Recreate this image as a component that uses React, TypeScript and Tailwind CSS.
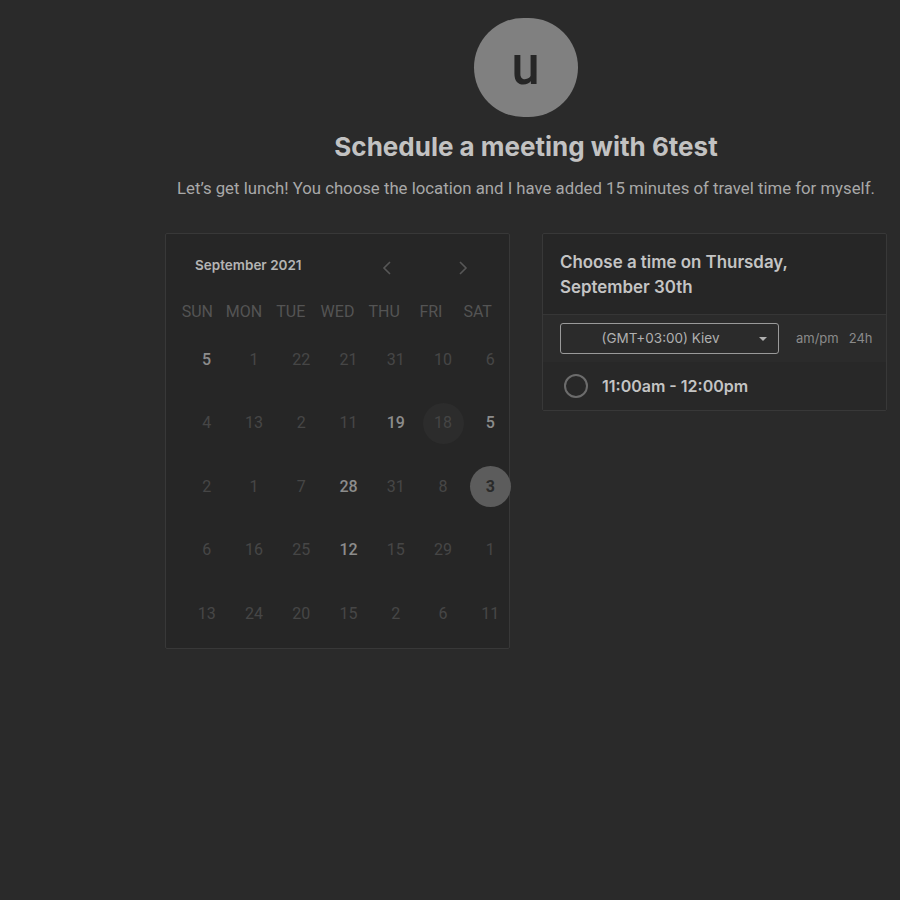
import React from "react";

type Day = { n: number; strong?: boolean; selected?: boolean; hover?: boolean };

const weeks: Day[][] = [
  [{ n: 5, strong: true }, { n: 1 }, { n: 22 }, { n: 21 }, { n: 31 }, { n: 10 }, { n: 6 }],
  [{ n: 4 }, { n: 13 }, { n: 2 }, { n: 11 }, { n: 19, strong: true }, { n: 18, hover: true }, { n: 5, strong: true }],
  [{ n: 2 }, { n: 1 }, { n: 7 }, { n: 28, strong: true }, { n: 31 }, { n: 8 }, { n: 3, selected: true }],
  [{ n: 6 }, { n: 16 }, { n: 25 }, { n: 12, strong: true }, { n: 15 }, { n: 29 }, { n: 1 }],
  [{ n: 13 }, { n: 24 }, { n: 20 }, { n: 15 }, { n: 2 }, { n: 6 }, { n: 11 }],
];

const dayNames = ["SUN", "MON", "TUE", "WED", "THU", "FRI", "SAT"];

function Chevron({ dir }: { dir: "left" | "right" }) {
  return (
    <svg width="12" height="16" viewBox="0 0 12 16" fill="none">
      <polyline
        points={dir === "left" ? "9,2 3,8 9,14" : "3,2 9,8 3,14"}
        stroke="#575757"
        strokeWidth="1.6"
      />
    </svg>
  );
}

function Calendar() {
  return (
    <div className="w-[345px] h-[416px] border border-[#383838] bg-[#262626] rounded-[2px] pt-[19px]">
      <div className="flex items-center h-[24px] pl-[29px]">
        <span className="font-['Inter'] font-semibold text-[13.5px] text-[#b4b4b4] w-[186px]">September 2021</span>
        <div className="flex items-center gap-[64px] mt-[6px]">
          <Chevron dir="left" />
          <Chevron dir="right" />
        </div>
      </div>
      <div className="grid grid-cols-7 w-[327px] ml-[8px] mt-[19px] h-[31px] items-center">
        {dayNames.map((d) => (
          <div key={d} className="text-center font-['Roboto'] text-[16px] text-[#545454]">
            {d}
          </div>
        ))}
      </div>
      <div className="ml-[17px] w-[331px] mt-[1px]">
        {weeks.map((week, i) => (
          <div key={i} className="grid grid-cols-7 h-[63.5px] items-center">
            {week.map((day, j) => (
              <div key={j} className="flex justify-center">
                <div
                  className={
                    "w-[41px] h-[41px] rounded-full flex items-center justify-center font-['Roboto'] text-[16px] " +
                    (day.selected
                      ? "bg-[#5c5c5c] text-[#2a2a2a] font-bold"
                      : day.hover
                      ? "bg-[#2c2c2c] text-[#454545]"
                      : day.strong
                      ? "text-[#8c8c8c] font-medium"
                      : "text-[#464646]")
                  }
                >
                  {day.n}
                </div>
              </div>
            ))}
          </div>
        ))}
      </div>
    </div>
  );
}

function TimePanel() {
  return (
    <div className="w-[345px] border border-[#383838] bg-[#262626] rounded-[2px] self-start">
      <div className="px-[17px] pt-[16px] pb-[14px] border-b border-[#363636] font-['Inter'] font-semibold text-[16.9px] leading-[25px] text-[#c4c4c4]">
        Choose a time on Thursday,
        <br />
        September 30th
      </div>
      <div className="flex items-center h-[47px] bg-[#2b2b2b] pl-[17px]">
        <div className="relative w-[219px] h-[31px] border border-[#9a9a9a] rounded-[3px] flex items-center justify-center pr-[18px] font-['Inter'] text-[13.5px] text-[#b0b0b0]">
          (GMT+03:00) Kiev
          <svg className="absolute right-[11px] top-[13px]" width="8" height="4" viewBox="0 0 8 4">
            <polygon points="0,0 8,0 4,4" fill="#b0b0b0" />
          </svg>
        </div>
        <span className="ml-[17px] font-['Inter'] text-[13px] text-[#8a8a8a]">am/pm</span>
        <span className="ml-[10px] font-['Inter'] text-[13px] text-[#8a8a8a]">24h</span>
      </div>
      <div className="flex items-center h-[48px] pl-[21px] bg-[#282828]">
        <div className="w-[24px] h-[24px] rounded-full border-2 border-[#6c6c6c]" />
        <span className="ml-[14px] font-['Inter'] font-semibold text-[16px] text-[#c4c4c4]">11:00am - 12:00pm</span>
      </div>
    </div>
  );
}

export default function App() {
  return (
    <div className="min-h-[900px] bg-[#2a2a2a] overflow-hidden">
      <div className="ml-[165px] w-[722px] flex flex-col items-center">
        <div className="mt-[18px] w-[104px] h-[99px] rounded-full bg-[#808080] flex items-center justify-center">
          <span className="font-['Roboto'] font-medium text-[56px] leading-none text-[#262626] -mt-[6px] scale-x-90">u</span>
        </div>
        <h1 className="mt-[13px] font-['Inter'] font-bold text-[26px] leading-[34px] text-[#c2c2c2]">
          Schedule a meeting with 6test
        </h1>
        <p className="mt-[12px] font-['Roboto'] text-[16.75px] leading-[24px] text-[#a8a8a8] whitespace-nowrap">
          Let’s get lunch! You choose the location and I have added 15 minutes of travel time for myself.
        </p>
        <div className="mt-[33px] flex gap-[32px] w-full">
          <Calendar />
          <TimePanel />
        </div>
      </div>
    </div>
  );
}
